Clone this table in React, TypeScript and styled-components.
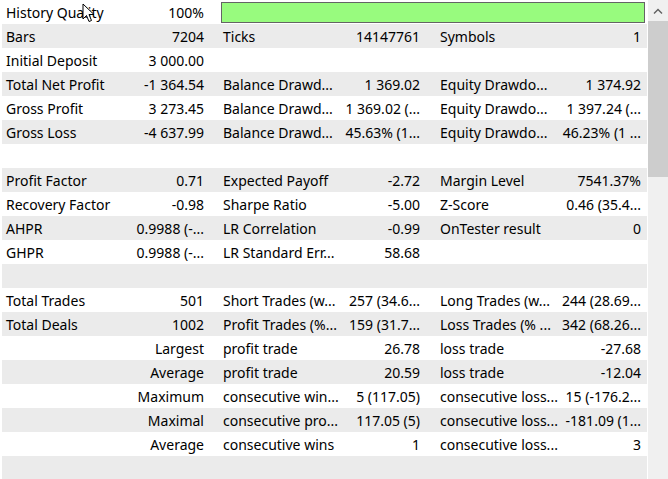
import React from "react";
import styled, { createGlobalStyle } from "styled-components";

const Global = createGlobalStyle`
  html, body { margin: 0; padding: 0; background: #ffffff; }
  body { font-family: "Noto Sans", "Open Sans", sans-serif; font-size: 14px; color: #000; }
  * { box-sizing: border-box; }
`;

const Frame = styled.div`
  position: relative;
  width: 668px;
  height: 479px;
  overflow: hidden;
  display: flex;
  background: #ffffff;
`;

const Table = styled.div`
  margin-left: 2px;
  width: 645px;
  display: flex;
  flex-direction: column;
`;

const Row = styled.div<{ $shade: boolean }>`
  height: 24px;
  flex: 0 0 24px;
  display: grid;
  grid-template-columns: 112px 105px 110px 107px 113px 88px;
  align-items: center;
  padding: 0 6px 0 4px;
  background: ${(p) => (p.$shade ? "#ebebeb" : "#ffffff")};
  white-space: nowrap;
`;

const Label = styled.div`
  overflow: visible;
  line-height: 24px;
  padding-top: 1px;
`;

const Value = styled.div<{ $pad: number }>`
  text-align: right;
  padding-right: ${(p) => p.$pad}px;
  line-height: 24px;
  padding-top: 1px;
`;

const QualityBar = styled.div`
  grid-column: 3 / 7;
  height: 21px;
  margin: 0 -4px 0 -2px;
  background: #98fb7e;
  border: 1px solid #646464;
`;

const Gap = styled.div`
  width: 1px;
  flex: 0 0 1px;
`;

const Scrollbar = styled.div`
  width: 20px;
  flex: 0 0 20px;
  background: #f0f0f0;
  display: flex;
  flex-direction: column;
`;

const ArrowButton = styled.div`
  height: 21px;
  display: flex;
  align-items: center;
  justify-content: center;
`;

const Thumb = styled.div`
  height: 156px;
  background: #cdcdcd;
`;

const Cursor = styled.svg`
  position: absolute;
  left: 82px;
  top: 3px;
`;

type RowData = { cells: string[] };

const rows: RowData[] = [
  { cells: ["Bars", "7204", "Ticks", "14147761", "Symbols", "1"] },
  { cells: ["Initial Deposit", "3 000.00", "", "", "", ""] },
  { cells: ["Total Net Profit", "-1 364.54", "Balance Drawd...", "1 369.02", "Equity Drawdo...", "1 374.92"] },
  { cells: ["Gross Profit", "3 273.45", "Balance Drawd...", "1 369.02 (...", "Equity Drawdo...", "1 397.24 (..."] },
  { cells: ["Gross Loss", "-4 637.99", "Balance Drawd...", "45.63% (1...", "Equity Drawdo...", "46.23% (1 ..."] },
  { cells: ["", "", "", "", "", ""] },
  { cells: ["Profit Factor", "0.71", "Expected Payoff", "-2.72", "Margin Level", "7541.37%"] },
  { cells: ["Recovery Factor", "-0.98", "Sharpe Ratio", "-5.00", "Z-Score", "0.46 (35.4..."] },
  { cells: ["AHPR", "0.9988 (-...", "LR Correlation", "-0.99", "OnTester result", "0"] },
  { cells: ["GHPR", "0.9988 (-...", "LR Standard Err...", "58.68", "", ""] },
  { cells: ["", "", "", "", "", ""] },
  { cells: ["Total Trades", "501", "Short Trades (w...", "257 (34.6...", "Long Trades (w...", "244 (28.69..."] },
  { cells: ["Total Deals", "1002", "Profit Trades (%...", "159 (31.7...", "Loss Trades (% ...", "342 (68.26..."] },
  { cells: ["", "Largest", "profit trade", "26.78", "loss trade", "-27.68"] },
  { cells: ["", "Average", "profit trade", "20.59", "loss trade", "-12.04"] },
  { cells: ["", "Maximum", "consecutive win...", "5 (117.05)", "consecutive loss...", "15 (-176.2..."] },
  { cells: ["", "Maximal", "consecutive pro...", "117.05 (5)", "consecutive loss...", "-181.09 (1..."] },
  { cells: ["", "Average", "consecutive wins", "1", "consecutive loss...", "3"] },
  { cells: ["", "", "", "", "", ""] },
];

export default function App() {
  return (
    <>
      <Global />
      <Frame>
        <Table>
          <Row $shade={false}>
            <Label>History Quality</Label>
            <Value $pad={19}>100%</Value>
            <QualityBar />
          </Row>
          {rows.map((r, i) => (
            <Row key={i} $shade={i % 2 === 0}>
              <Label>{r.cells[0]}</Label>
              <Value $pad={19}>{r.cells[1]}</Value>
              <Label>{r.cells[2]}</Label>
              <Value $pad={20}>{r.cells[3]}</Value>
              <Label>{r.cells[4]}</Label>
              <Value $pad={0}>{r.cells[5]}</Value>
            </Row>
          ))}
        </Table>
        <Gap />
        <Scrollbar>
          <ArrowButton>
            <svg width="10" height="6" viewBox="0 0 10 6">
              <path d="M1 5.5 L5 1.5 L9 5.5" fill="none" stroke="#606060" strokeWidth="1.4" />
            </svg>
          </ArrowButton>
          <Thumb />
        </Scrollbar>
        <Cursor width="14" height="21" viewBox="0 0 14 21">
          <path
            d="M1 1 L1 16 L4.5 12.5 L7 18.5 L9.5 17.5 L7 11.5 L12 11.5 Z"
            fill="#ffffff"
            stroke="#000000"
            strokeWidth="1"
            strokeLinejoin="round"
          />
        </Cursor>
      </Frame>
    </>
  );
}
